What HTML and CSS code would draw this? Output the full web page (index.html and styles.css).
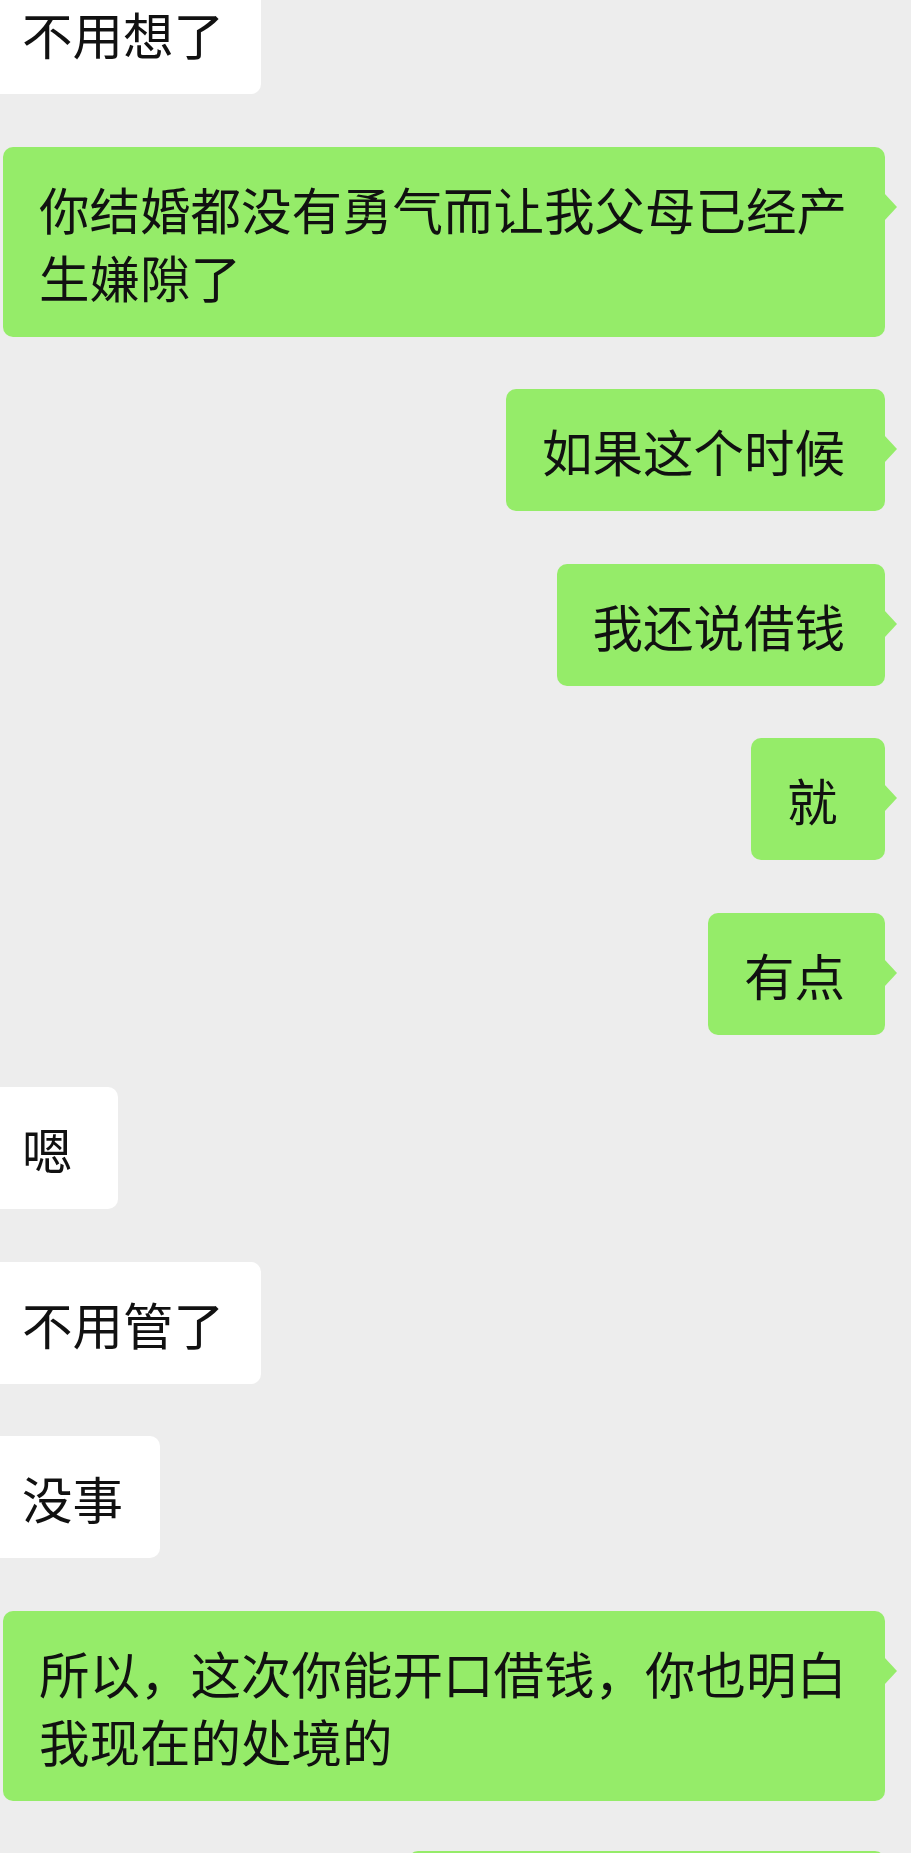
FILE: index.html
```html
<!DOCTYPE html>
<html lang="zh-CN">
<head>
<meta charset="utf-8">
<title>聊天记录</title>
<link rel="stylesheet" href="styles.css">
</head>
<body>
<div class="chat">
  <div class="row left first"><div class="bubble white">不用想了</div></div>
  <div class="row right"><div class="bubble green wide">你结婚都没有勇气而让我父母已经产生嫌隙了</div></div>
  <div class="row right"><div class="bubble green">如果这个时候</div></div>
  <div class="row right"><div class="bubble green">我还说借钱</div></div>
  <div class="row right"><div class="bubble green single">就</div></div>
  <div class="row right"><div class="bubble green">有点</div></div>
  <div class="row left"><div class="bubble white single">嗯</div></div>
  <div class="row left"><div class="bubble white">不用管了</div></div>
  <div class="row left"><div class="bubble white">没事</div></div>
  <div class="row right"><div class="bubble green wide">所以，这次你能开口借钱，你也明白我现在的处境的</div></div>
  <div class="row right last"><div class="bubble green partial"></div></div>
</div>
</body>
</html>
```
FILE: styles.css
```css
html, body {
  margin: 0;
  padding: 0;
  overflow: hidden;
  background: #ededed;
}

.chat {
  display: flex;
  flex-direction: column;
  gap: 52.5px;
  font-family: "Noto Sans CJK SC", "Noto Sans", sans-serif;
  font-size: 50.5px;
  line-height: 68px;
  color: #111111;
}

.row {
  display: flex;
}

.row.left {
  justify-content: flex-start;
}

.row.right {
  justify-content: flex-end;
  padding-right: 26px;
}

.row.first {
  margin-top: -28px;
}

.row.last {
  margin-top: -2px;
}

.bubble {
  position: relative;
  padding: 27px 37px 27px 36px;
  box-sizing: border-box;
  white-space: pre-wrap;
  word-break: break-all;
}

.bubble.white {
  background: #ffffff;
  border-radius: 0 10px 10px 0;
  padding-left: 22px;
  padding-right: 37px;
}

.bubble.white.single {
  min-width: 118px;
}

.bubble.green {
  background: #95ec69;
  border-radius: 10px;
  padding-right: 40px;
  max-width: 882px;
}

.bubble.green.single {
  min-width: 134px;
}

.bubble.green::after {
  content: "";
  position: absolute;
  right: -12px;
  top: 46px;
  border-left: 13px solid #95ec69;
  border-top: 14px solid transparent;
  border-bottom: 14px solid transparent;
}

.bubble.green.wide {
  width: 882px;
  padding-right: 36px;
}

.bubble.green.partial {
  width: 477px;
  height: 122px;
}
```
